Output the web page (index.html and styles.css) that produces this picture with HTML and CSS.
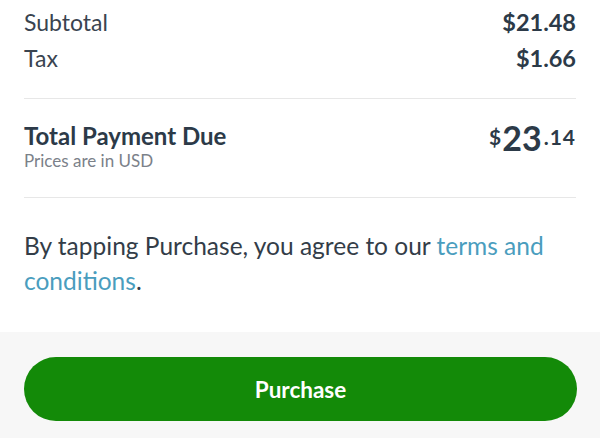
FILE: index.html
```html
<!DOCTYPE html>
<html lang="en">
<head>
    <meta charset="UTF-8">
    <meta name="viewport" content="width=device-width, initial-scale=1.0">
    <title>Checkout</title>
    <link rel="stylesheet" href="styles.css">
</head>
<body>
    <div class="summary">
        <div class="lines">
            <div class="line">
                <span>Subtotal</span>
                <span class="amount">$21.48</span>
            </div>
            <div class="line">
                <span>Tax</span>
                <span class="amount">$1.66</span>
            </div>
        </div>

        <div class="total">
            <div class="total-label">
                <h2>Total Payment Due</h2>
                <p class="currency">Prices are in USD</p>
            </div>
            <div class="total-amount">
                <sup class="sign">$</sup><span class="dollars">23</span><sup class="cents">.14</sup>
            </div>
        </div>

        <p class="terms">By tapping Purchase, you agree to our <a href="#">terms and conditions</a>.</p>
    </div>

    <div class="footer">
        <button class="purchase">Purchase</button>
    </div>
</body>
</html>
```

FILE: styles.css
```css
body {
    font-family: Lato, 'Noto Sans', sans-serif;
    margin: 0;
    padding: 0;
    color: #2c3a48;
    background: #fff;
}

.summary {
    padding: 4px 24px 0;
}

.lines {
    padding-bottom: 22px;
    border-bottom: 1px solid #e7e7e7;
}

.line {
    display: flex;
    justify-content: space-between;
    font-size: 23px;
    line-height: 36px;
    color: #3a4450;
}

.line .amount {
    font-weight: 700;
    font-size: 23.5px;
    color: #2c3a48;
}

.total {
    display: flex;
    justify-content: space-between;
    align-items: flex-start;
    padding: 24px 0 26px;
    border-bottom: 1px solid #e7e7e7;
}

.total h2 {
    margin: 0;
    font-size: 24px;
    line-height: 26px;
    font-weight: 700;
}

.currency {
    margin: 2px 0 0;
    font-size: 17px;
    line-height: 20px;
    color: #7b8189;
}

.total-amount {
    display: flex;
    align-items: flex-start;
    font-weight: 700;
    margin-top: 1px;
}

.total-amount sup {
    font-size: 21px;
    line-height: 26px;
    vertical-align: baseline;
}

.total-amount .sign {
    margin-right: 1px;
}

.total-amount .cents {
    margin-left: 2px;
    letter-spacing: 1px;
}

.total-amount .dollars {
    font-size: 34px;
    line-height: 36px;
    margin-top: -4px;
}

.terms {
    margin: 30px 0 0;
    font-size: 24.5px;
    line-height: 35px;
    color: #333d48;
    padding-bottom: 34px;
}

.terms a {
    color: #4a9dbe;
    text-decoration: none;
}

.footer {
    background: #f7f7f7;
    padding: 25px 23px 17px 24px;
}

.purchase {
    display: block;
    width: 100%;
    height: 64px;
    border: none;
    border-radius: 32px;
    background: #138a08;
    color: #fff;
    font-family: Lato, 'Noto Sans', sans-serif;
    font-size: 22.5px;
    font-weight: 700;
}
```
